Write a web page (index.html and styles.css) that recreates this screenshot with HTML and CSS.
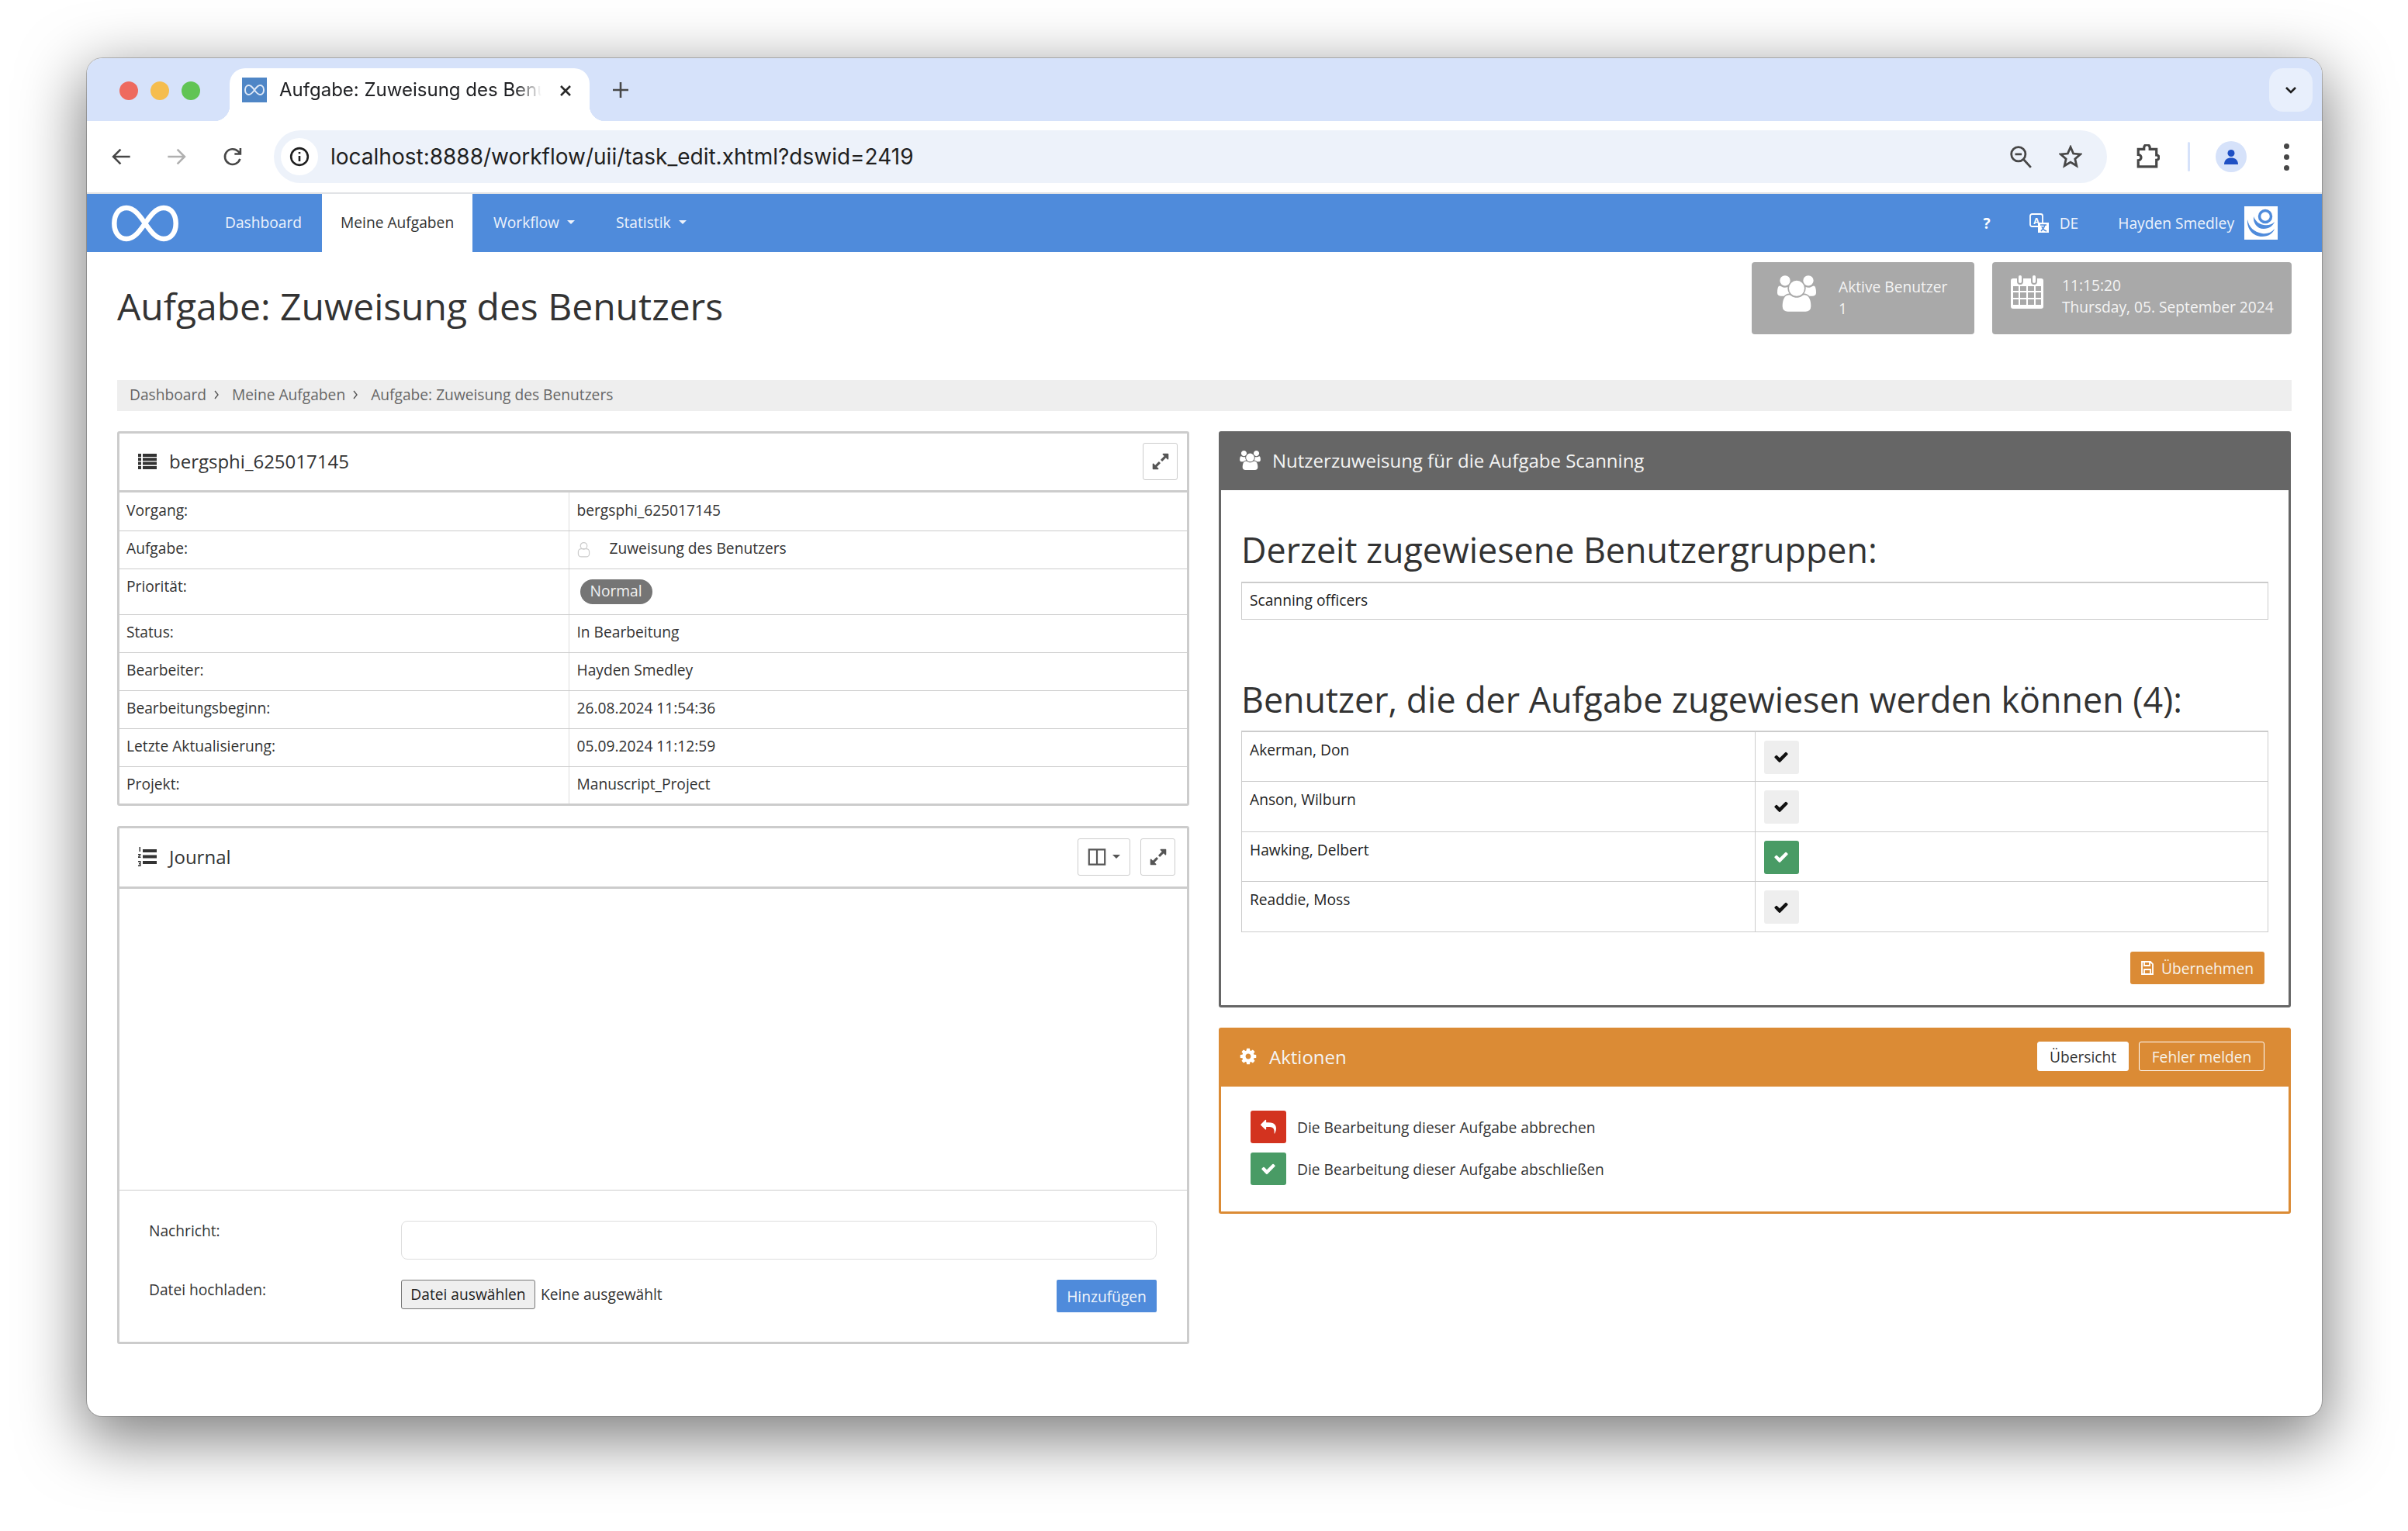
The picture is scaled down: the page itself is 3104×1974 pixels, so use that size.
FILE: index.html
```html
<!DOCTYPE html>
<html lang="de">
<head>
<meta charset="utf-8">
<title>Aufgabe: Zuweisung des Benutzers</title>
<link rel="stylesheet" href="styles.css">
</head>
<body>
<svg class="sprite" width="0" height="0">
  <defs>
    <symbol id="i-check" viewBox="0 0 1792 1792"><path d="M1671 566q0 40-28 68l-724 724-136 136q-28 28-68 28t-68-28l-136-136-362-362q-28-28-28-68t28-68l136-136q28-28 68-28t68 28l294 295 656-657q28-28 68-28t68 28l136 136q28 28 28 68z"/></symbol>
    <symbol id="i-users" viewBox="0 0 1920 1792"><path d="M593 896q-162 5-265 128h-134q-82 0-138-40.500t-56-118.500q0-353 124-353 6 0 43.500 21t97.500 42.500 119 21.500q67 0 133-23-5 37-5 66 0 139 81 256zm1071 637q0 120-73 189.500t-194 69.500h-874q-121 0-194-69.500t-73-189.500q0-53 3.500-103.500t14-109 26.500-108.500 43-97.500 62-81 85.500-53.500 111.500-20q10 0 43 21.500t73 48 107 48 135 21.500 135-21.500 107-48 73-48 43-21.500q61 0 111.500 20t85.500 53.500 62 81 43 97.500 26.500 108.500 14 109 3.500 103.500zm-1024-1277q0 106-75 181t-181 75-181-75-75-181 75-181 181-75 181 75 75 181zm704 384q0 159-112.500 271.500t-271.500 112.500-271.500-112.500-112.500-271.500 112.500-271.500 271.500-112.500 271.500 112.500 112.500 271.500zm576 225q0 78-56 118.500t-138 40.500h-134q-103-123-265-128 81-117 81-256 0-29-5-66 66 23 133 23 59 0 119-21.500t97.500-42.500 43.500-21q124 0 124 353zm-128-609q0 106-75 181t-181 75-181-75-75-181 75-181 181-75 181 75 75 181z"/></symbol>
    <symbol id="i-cog" viewBox="0 0 1792 1792"><path d="M1152 896q0-106-75-181t-181-75-181 75-75 181 75 181 181 75 181-75 75-181zm512-109v222q0 12-8 23t-20 13l-185 28q-19 54-39 91 35 50 107 138 10 12 10 25t-9 23q-27 37-99 108t-94 71q-12 0-26-9l-138-108q-44 23-91 38-16 136-29 186-7 28-36 28h-222q-14 0-24.500-8.500t-11.500-21.500l-28-184q-49-16-90-37l-141 107q-10 9-25 9-14 0-25-11-126-114-165-168-7-10-7-23 0-12 8-23 15-21 51-66.500t54-70.500q-27-50-41-99l-183-27q-13-2-21-12.500t-8-23.500v-222q0-12 8-23t19-13l186-28q14-46 39-92-40-57-107-138-10-12-10-24 0-10 9-23 26-36 98.500-107.500t94.500-71.500q13 0 26 10l138 107q44-23 91-38 16-136 29-186 7-28 36-28h222q14 0 24.500 8.500t11.500 21.500l28 184q49 16 90 37l142-107q9-9 24-9 13 0 25 10 129 119 165 170 7 8 7 22 0 12-8 23-15 21-51 66.500t-54 70.500q26 50 41 98l183 28q13 2 21 12.500t8 23.500z"/></symbol>
    <symbol id="i-reply" viewBox="0 0 1792 1792"><path d="M1792 1120q0 166-127 451-3 7-10.500 24t-13.500 30-13 22q-12 17-28 17-15 0-23.500-10t-8.500-25q0-9 2.500-26.500t2.500-23.500q5-68 5-123 0-101-17.500-181t-48.500-138.500-80-101-105.500-69.500-133-42.500-154-21.500-175.500-6h-224v256q0 26-19 45t-45 19-45-19l-512-512q-19-19-19-45t19-45l512-512q19-19 45-19t45 19 19 45v256h224q713 0 875 403 53 134 53 333z"/></symbol>
    <symbol id="i-expand" viewBox="0 0 1792 1792"><path d="M883 1056q0 13-10 23l-332 332 144 144q19 19 19 45t-19 45-45 19h-448q-26 0-45-19t-19-45v-448q0-26 19-45t45-19 45 19l144 144 332-332q10-10 23-10t23 10l114 114q10 10 10 23zm781-864v448q0 26-19 45t-45 19-45-19l-144-144-332 332q-10 10-23 10t-23-10l-114-114q-10-10-10-23t10-23l332-332-144-144q-19-19-19-45t19-45 45-19h448q26 0 45 19t19 45z"/></symbol>
    <symbol id="i-infinity" viewBox="0 0 86 48"><path fill="none" stroke="currentColor" stroke-width="6.500" d="M43 24C36 14 29 4 19 4 9 4 3.300 13 3.300 24S9 44 19 44c10 0 17-10 24-20S57 4 67 4c10 0 15.700 9 15.700 20S77 44 67 44C57 44 50 34 43 24Z"/></symbol>
  </defs>
</svg>

<div class="window">
  <div class="tabstrip">
    <div class="lights">
      <span class="light light-red"></span>
      <span class="light light-yellow"></span>
      <span class="light light-green"></span>
    </div>
    <div class="tab">
      <span class="favicon"><svg class="favicon-mark"><use href="#i-infinity"/></svg></span>
      <span class="tab-title">Aufgabe: Zuweisung des Benutzers</span>
      <svg class="tab-close" viewBox="0 0 16 16"><path d="M2 2l12 12M14 2L2 14"/></svg>
    </div>
    <svg class="tab-new" viewBox="0 0 20 20"><path d="M10 0v20M0 10h20"/></svg>
    <span class="tab-menu"><svg viewBox="0 0 16 10"><path d="M2 2l6 6 6-6"/></svg></span>
  </div>

  <div class="toolbar">
    <svg class="tool tool-back" viewBox="0 0 24 24"><path d="M22 12H4M11.500 4l-8 8 8 8"/></svg>
    <svg class="tool tool-fwd" viewBox="0 0 24 24"><path d="M2 12h18M12.500 4l8 8-8 8"/></svg>
    <svg class="tool tool-reload" viewBox="0 0 24 24"><path d="M20 14.500A8.500 8.500 0 1 1 18 6.200L20.500 9M20.500 2.500v6.500H14"/></svg>
    <div class="omnibox">
      <span class="site-info"><svg viewBox="0 0 24 24"><circle cx="12" cy="12" r="10"/><path d="M12 11v6.500M12 6.500v2"/></svg></span>
      <span class="url">localhost:8888/workflow/uii/task_edit.xhtml?dswid=2419</span>
      <svg class="omni-icon" viewBox="0 0 28 28"><circle cx="11" cy="11" r="8.500"/><path d="M17 17l9 10M7 11h8"/></svg>
      <svg class="omni-icon omni-star" viewBox="0 0 28 28"><path d="M14 2.500l3.400 7.800 8.400.8-6.400 5.600 1.900 8.300-7.300-4.400-7.300 4.400 1.900-8.300-6.400-5.600 8.400-.8z"/></svg>
    </div>
    <svg class="tool tool-ext" viewBox="0 0 30 30"><path d="M11 6V4a3 3 0 0 1 7 0v2h8v7a3 3 0 0 1 0 6v8H4v-7.500a3.500 3.500 0 0 0 0-7V6z"/></svg>
    <span class="tool-divider"></span>
    <span class="profile"><svg viewBox="0 0 24 24"><circle cx="12" cy="7.500" r="4.500"/><path d="M3 22c0-6 4-8.500 9-8.500s9 2.500 9 8.500z"/></svg></span>
    <span class="kebab"><i></i><i></i><i></i></span>
  </div>

  <nav class="appnav">
    <svg class="logo"><use href="#i-infinity"/></svg>
    <a class="nav-item">Dashboard</a>
    <a class="nav-item nav-active">Meine Aufgaben</a>
    <a class="nav-item">Workflow<span class="caret"></span></a>
    <a class="nav-item">Statistik<span class="caret"></span></a>
    <span class="nav-spacer"></span>
    <a class="nav-help">?</a>
    <svg class="nav-translate" viewBox="0 0 26 26"><rect class="tr-back" x="1" y="1" width="16" height="16" rx="2.500"/><text class="tr-letter" x="9" y="13.500">A</text><path class="tr-front" d="M11 12h14v13H11z"/><path class="tr-x" d="M14 15h8M20 15c-1 4-3 6-5 8M16 17c1 3 3 5 6 6"/></svg>
    <a class="nav-lang">DE</a>
    <a class="nav-user">Hayden Smedley</a>
    <svg class="avatar" viewBox="0 0 43 43"><rect width="43" height="43" fill="#fff"/><path class="av-blue" d="M4 17c-1 12 7 22 19 22 8 0 14-4 16-10-4 5-10 7-16 6C12 33 6 27 4 17z"/><path class="av-blue" d="M12 13c-1 8 4 16 13 16 7 0 12-4 14-9-4 4-9 5-14 4-6-1-11-5-13-11z"/><circle class="av-ring" cx="27" cy="13" r="7.500"/></svg>
  </nav>

  <main class="page">
    <header class="page-head">
      <h1 class="page-title">Aufgabe: Zuweisung des Benutzers</h1>
      <div class="stat stat-users">
        <svg class="stat-icon-users"><use href="#i-users"/></svg>
        <div class="stat-text"><div>Aktive Benutzer</div><div>1</div></div>
      </div>
      <div class="stat stat-time">
        <svg class="stat-icon-cal" viewBox="0 0 42 44"><path fill-rule="evenodd" d="M3 5h5v4a4 4 0 0 0 8 0V5h10v4a4 4 0 0 0 8 0V5h5a3 3 0 0 1 3 3v33a3 3 0 0 1-3 3H3a3 3 0 0 1-3-3V8a3 3 0 0 1 3-3zm0 10v6h7v-6zm9 0v6h8v-6zm10 0v6h8v-6zm10 0v6h7v-6zM3 23v7h7v-7zm9 0v7h8v-7zm10 0v7h8v-7zm10 0v7h7v-7zM3 32v7h7v-7zm9 0v7h8v-7zm10 0v7h8v-7zm10 0v7h7v-7z"/><rect x="10" y="1" width="4" height="10" rx="2"/><rect x="28" y="1" width="4" height="10" rx="2"/></svg>
        <div class="stat-text"><div>11:15:20</div><div>Thursday, 05. September 2024</div></div>
      </div>
    </header>

    <div class="breadcrumb">
      <a>Dashboard</a><svg class="crumb-sep" viewBox="0 0 8 12"><path d="M2 1l4 5-4 5"/></svg>
      <a>Meine Aufgaben</a><svg class="crumb-sep" viewBox="0 0 8 12"><path d="M2 1l4 5-4 5"/></svg>
      <a>Aufgabe: Zuweisung des Benutzers</a>
    </div>

    <div class="columns">
      <div class="column">
        <section class="panel">
          <div class="panel-head panel-head-slim">
            <svg class="head-icon" viewBox="0 0 24 20"><path d="M0 0h4v4H0zM6 0h18v4H6zM0 5.300h4v4H0zM6 5.300h18v4H6zM0 10.600h4v4H0zM6 10.600h18v4H6zM0 16h4v4H0zM6 16h18v4H6z"/></svg>
            <h2 class="panel-title">bergsphi_625017145</h2>
            <span class="icon-btn icon-btn-first"><svg><use href="#i-expand"/></svg></span>
          </div>
          <table class="details">
            <tr><th>Vorgang:</th><td>bergsphi_625017145</td></tr>
            <tr><th>Aufgabe:</th><td><svg class="task-icon" viewBox="0 0 18 22"><circle cx="9" cy="6" r="4.500"/><rect x="1.500" y="10" width="15" height="11" rx="4"/></svg>Zuweisung des Benutzers</td></tr>
            <tr class="row-priority"><th>Priorität:</th><td><span class="badge">Normal</span></td></tr>
            <tr><th>Status:</th><td>In Bearbeitung</td></tr>
            <tr><th>Bearbeiter:</th><td>Hayden Smedley</td></tr>
            <tr><th>Bearbeitungsbeginn:</th><td>26.08.2024 11:54:36</td></tr>
            <tr><th>Letzte Aktualisierung:</th><td>05.09.2024 11:12:59</td></tr>
            <tr><th>Projekt:</th><td>Manuscript_Project</td></tr>
          </table>
        </section>

        <section class="panel">
          <div class="panel-head">
            <svg class="head-icon head-icon-ol" viewBox="0 0 24 25"><path d="M6 3h18v4H6zM6 10.500h18v4H6zM6 18h18v4H6zM1.500 0h1.500v6H1.500zM0 9h3.500v1.500L1.500 12.500h2V14H0v-1.500l2-2H0zM0 18h3.500v7H0v-1.500h2v-1.200H1v-1.300h1v-1.500H0z"/></svg>
            <h2 class="panel-title">Journal</h2>
            <span class="icon-btn icon-btn-cols"><svg viewBox="0 0 20 20"><path class="cols-shape" d="M1.500 2h17v16h-17zM10 2v16"/></svg><span class="caret caret-dark"></span></span>
            <span class="icon-btn"><svg><use href="#i-expand"/></svg></span>
          </div>
          <div class="journal-body"></div>
          <form class="journal-form">
            <label class="form-label">Nachricht:</label>
            <input class="form-input" type="text">
            <label class="form-label">Datei hochladen:</label>
            <div class="file-row">
              <button class="file-btn" type="button">Datei auswählen</button>
              <span class="file-name">Keine ausgewählt</span>
              <button class="btn-blue" type="button">Hinzufügen</button>
            </div>
          </form>
        </section>
      </div>

      <div class="column">
        <section class="panel panel-dark">
          <div class="panel-bar">
            <svg class="bar-icon-users"><use href="#i-users"/></svg>
            <h2 class="bar-title">Nutzerzuweisung für die Aufgabe Scanning</h2>
          </div>
          <div class="assign-body">
            <h3 class="assign-heading">Derzeit zugewiesene Benutzergruppen:</h3>
            <table class="assign-table"><tr><td>Scanning officers</td></tr></table>
            <h3 class="assign-heading assign-heading-second">Benutzer, die der Aufgabe zugewiesen werden können (4):</h3>
            <table class="assign-table users-table">
              <tr><td>Akerman, Don</td><td><span class="check-btn"><svg><use href="#i-check"/></svg></span></td></tr>
              <tr><td>Anson, Wilburn</td><td><span class="check-btn"><svg><use href="#i-check"/></svg></span></td></tr>
              <tr><td>Hawking, Delbert</td><td><span class="check-btn check-on"><svg><use href="#i-check"/></svg></span></td></tr>
              <tr><td>Readdie, Moss</td><td><span class="check-btn"><svg><use href="#i-check"/></svg></span></td></tr>
            </table>
            <div class="assign-foot">
              <button class="btn-orange" type="button"><svg viewBox="0 0 16 18"><path d="M1 1h11l3 3v13H1zM4 1v5h7V1M4 17v-6h8v6"/></svg>Übernehmen</button>
            </div>
          </div>
        </section>

        <section class="panel panel-orange">
          <div class="panel-bar">
            <svg class="bar-icon-cog"><use href="#i-cog"/></svg>
            <h2 class="bar-title">Aktionen</h2>
            <button class="bar-btn bar-btn-white" type="button">Übersicht</button>
            <button class="bar-btn bar-btn-line" type="button">Fehler melden</button>
          </div>
          <div class="actions-body">
            <div class="action"><span class="action-btn action-red"><svg><use href="#i-reply"/></svg></span><span>Die Bearbeitung dieser Aufgabe abbrechen</span></div>
            <div class="action"><span class="action-btn action-green"><svg><use href="#i-check"/></svg></span><span>Die Bearbeitung dieser Aufgabe abschließen</span></div>
          </div>
        </section>
      </div>
    </div>
  </main>
</div>
</body>
</html>
```
FILE: styles.css
```css
* { box-sizing: border-box; }
html, body { margin: 0; height: 100%; }
body {
  width: 3104px; height: 1974px; overflow: hidden;
  padding: 75px 111px 148px 112px;
  background: #fff;
  font-family: "Open Sans", sans-serif;
  font-size: 19.200px; color: #333;
}
.sprite { position: absolute; }
svg { display: block; flex: none; fill: currentColor; }

.window {
  height: 1751px; border-radius: 20px; overflow: hidden; background: #fff;
  display: flex; flex-direction: column;
  box-shadow: 0 0 0 1px rgba(0,0,0,.22), 0 24px 80px 6px rgba(0,0,0,.5);
}

/* browser chrome */
.tabstrip {
  height: 81px; flex: none; background: #d6e2fa;
  display: flex; align-items: flex-start; padding-top: 13px;
}
.lights { display: flex; gap: 16px; padding: 17px 0 0 42px; width: 184px; }
.light { width: 24px; height: 24px; border-radius: 50%; }
.light-red { background: #ee6a5f; }
.light-yellow { background: #f5bd4f; }
.light-green { background: #61c454; }
.tab {
  position: relative; width: 464px; height: 68px; background: #fff;
  border-radius: 20px 20px 0 0; display: flex; align-items: flex-start;
  padding: 12px 16px 0; color: #1f1f1f;
}
.tab::before, .tab::after {
  content: ""; position: absolute; bottom: 0; width: 20px; height: 20px;
}
.tab::before { left: -20px; background: radial-gradient(circle at 0 0, transparent 20px, #fff 20.500px); }
.tab::after { right: -20px; background: radial-gradient(circle at 100% 0, transparent 20px, #fff 20.500px); }
.favicon { width: 32px; height: 32px; background: #4f86c6; display: flex; align-items: center; justify-content: center; flex: none; color: #dfe9f7; }
.favicon-mark { width: 26px; height: 16px; }
.tab-title {
  width: 338px; flex: none; margin-left: 16px; white-space: nowrap; overflow: hidden;
  font: 400 24px/32px Inter, sans-serif; color: #202124;
  -webkit-mask-image: linear-gradient(90deg, #000 90%, transparent 100%);
  mask-image: linear-gradient(90deg, #000 90%, transparent 100%);
}
.tab-close { width: 16px; height: 16px; margin: 9px 0 0 23px; fill: none; stroke: #2a2a2a; stroke-width: 2.600; }
.tab-new { width: 20px; height: 20px; margin: 18px 0 0 30px; fill: none; stroke: #474747; stroke-width: 2.600; }
.tab-menu {
  margin-left: auto; margin-right: 12px; width: 56px; height: 56px; border-radius: 18px;
  background: #e8effc; display: flex; align-items: center; justify-content: center;
}
.tab-menu svg { width: 16px; height: 10px; fill: none; stroke: #1f1f1f; stroke-width: 2.600; }

.toolbar {
  height: 94px; flex: none; background: #fff; border-bottom: 2px solid #e1e3e6;
  display: flex; align-items: center; padding-left: 30px;
  border-radius: 20px 20px 0 0;
}
.tool { width: 28px; height: 28px; fill: none; stroke: #474747; stroke-width: 2.200; }
.tool-fwd { margin-left: 44px; stroke: #b0b0b0; }
.tool-reload { margin-left: 44px; }
.omnibox {
  width: 2363px; height: 68px; margin-left: 39px; border-radius: 34px; background: #edf2fa;
  display: flex; align-items: center; padding-left: 9px;
}
.site-info { width: 48px; height: 48px; border-radius: 50%; background: #fff; display: flex; align-items: center; justify-content: center; flex: none; }
.site-info svg { width: 26px; height: 26px; fill: none; stroke: #1f1f1f; stroke-width: 2.400; }
.url { margin-left: 16px; font: 400 28px/36px Inter, sans-serif; color: #1f1f1f; white-space: nowrap; }
.omni-icon { width: 30px; height: 30px; margin-left: auto; fill: none; stroke: #474747; stroke-width: 2.600; }
.omni-star { margin-left: 34px; margin-right: 32px; }
.tool-ext { width: 32px; height: 32px; margin-left: 36px; stroke-width: 3; }
.tool-divider { width: 3px; height: 38px; margin-left: 36px; border-radius: 2px; background: #d6e2fa; }
.profile { width: 40px; height: 40px; margin-left: 33px; border-radius: 50%; background: #d6e2fa; display: flex; align-items: center; justify-content: center; }
.profile svg { width: 24px; height: 26px; fill: #1f50c4; }
.kebab { display: flex; flex-direction: column; gap: 7px; margin-left: 48px; }
.kebab i { width: 7px; height: 7px; border-radius: 50%; background: #474747; }

/* app nav */
.appnav {
  height: 75px; flex: none; background: #4f8bdb; color: #eef3fb;
  display: flex; align-items: stretch;
}
.logo { width: 86px; height: 48px; margin: 14px 33px 0 32px; color: #fff; }
.nav-item { display: flex; align-items: center; padding: 0 26px 2px 27px; line-height: 1; }
.nav-active { background: #fff; color: #333; padding: 0 24px 2px; width: 194px; white-space: nowrap; }
.caret {
  display: inline-block; width: 0; height: 0; margin-left: 10px;
  border: 5px solid transparent; border-top-color: currentColor; border-bottom: 0;
}
.nav-spacer { flex: 1; }
.nav-help { align-self: center; font-weight: 700; margin-right: 50px; color: #fff; }
.nav-translate { align-self: center; width: 26px; height: 26px; margin-right: 13px; }
.tr-back { fill: none; stroke: #fff; stroke-width: 1.800; }
.tr-letter { font: 700 11px "Open Sans", sans-serif; fill: #fff; text-anchor: middle; }
.tr-front { fill: #fff; }
.tr-x { fill: none; stroke: #4f8bdb; stroke-width: 1.600; }
.nav-lang { align-self: center; margin-right: 51px; }
.nav-user { align-self: center; margin-right: 13px; }
.avatar { align-self: center; width: 43px; height: 43px; margin-right: 57px; }
.av-blue { fill: #4f8bdb; }
.av-ring { fill: none; stroke: #4f8bdb; stroke-width: 3.500; }

/* page */
.page { padding: 13px 39px 0; flex: 1; }
.page-head { display: flex; align-items: flex-start; gap: 23px; height: 93px; }
.page-title { flex: 1; margin: 26px 0 0; font-size: 48px; font-weight: 400; line-height: 62px; color: #333; }
.stat {
  height: 93px; background: #a9a9a9; border-radius: 4px; color: #f4f4f4;
  display: flex; align-items: flex-start; line-height: 28px;
}
.stat-users { width: 287px; padding: 17px 0 0 33px; }
.stat-time { width: 386px; padding: 15px 0 0 24px; }
.stat-icon-users { width: 50px; height: 47px; color: #fff; }
.stat-icon-cal { width: 42px; height: 44px; color: #fff; margin-top: 1px; }
.stat-users .stat-text { margin-left: 29px; }
.stat-time .stat-text { margin-left: 24px; }
.stat-text { white-space: nowrap; padding-top: 1px; }

.breadcrumb {
  height: 40px; margin: 59px 0 26px; padding: 0 0 3px 16px; background: #eee; color: #666;
  display: flex; align-items: center;
}
.crumb-sep { width: 8px; height: 12px; margin: 0 16px 0 9px; fill: none; stroke: #555; stroke-width: 1.400; }

.columns { display: grid; grid-template-columns: 1382px 1382px; gap: 38px; align-items: start; }
.column { display: flex; flex-direction: column; gap: 26px; }

.panel { border: 3px solid #ccc; border-radius: 3px; background: #fff; }
.panel-head {
  height: 78px; display: flex; align-items: center; padding: 0 15px 2px 24px;
  border-bottom: 3px solid #ccc; gap: 13px;
}
.panel-head-slim { height: 76px; }
.head-icon { width: 24px; height: 20px; color: #333; }
.head-icon-ol { height: 25px; }
.panel-title { margin: 0 auto 0 3px; font-size: 24px; font-weight: 400; color: #333; }
.icon-btn {
  width: 45px; height: 48px; border: 1px solid #ccc; border-radius: 3px; background: #fff;
  display: flex; align-items: center; justify-content: center; color: #555; flex: none;
}
.icon-btn svg { width: 24px; height: 24px; }
.icon-btn-first { margin-right: -3px; }
.icon-btn-cols { width: 68px; gap: 8px; }
.cols-shape { fill: none; stroke: #555; stroke-width: 1.800; }
.caret-dark { margin-left: 0; }

.details { width: 100%; border-collapse: collapse; }
.details th, .details td {
  font-weight: 400; text-align: left; vertical-align: top; padding: 8px 10px 0; line-height: 28px;
  border-bottom: 1px solid #ccc; color: #333; height: 49px;
}
.details tr:first-child th, .details tr:first-child td { padding-top: 9px; }
.details tr:last-child th, .details tr:last-child td { border-bottom: 0; height: 48px; }
.details th { width: 579px; padding-left: 9px; border-right: 1px solid #ddd; }
.details td { white-space: nowrap; }
.task-icon { display: inline-block; width: 17px; height: 21px; margin-right: 25px; vertical-align: -5px; fill: none; stroke: #ccc; stroke-width: 1.300; }
.details .row-priority td { padding: 13px 0 0 14px; height: 59px; }
.badge {
  display: block; width: 93px; height: 32px; border-radius: 16px; background: #757575; color: #f2f2f2;
  text-align: center; line-height: 30px;
}

.journal-body { height: 389px; border-bottom: 1px solid #ccc; }
.journal-form {
  height: 195px; display: grid; grid-template-columns: 325px 974px; grid-template-rows: 50px 42px;
  row-gap: 26px; padding: 39px 0 0 38px;
}
.form-label { line-height: 26px; color: #333; }
.form-input { width: 974px; height: 50px; border: 1px solid #ddd; border-radius: 8px; background: #fff; }
.file-row { display: flex; align-items: flex-start; }
.file-btn {
  width: 173px; height: 38px; padding: 0 0 2px; background: #efefef; border: 1px solid #767676; border-radius: 3px;
  font: 400 19.200px "Open Sans", sans-serif; color: #222; white-space: nowrap;
}
.file-name { margin-left: 7px; line-height: 38px; color: #333; }
.btn-blue {
  margin-left: auto; width: 129px; height: 42px; background: #4f8bdb; border: 0; border-radius: 2px;
  color: #f2f6fc; font: 400 19.200px "Open Sans", sans-serif; padding: 0;
}

.panel-dark { border-color: #666; height: 743px; }
.panel-orange { border-color: #db8b35; height: 240px; }
.panel-bar { display: flex; align-items: center; color: #f4f4f4; margin-top: -3px; height: 76px; padding-bottom: 2px; }
.panel-dark .panel-bar { background: #666; }
.panel-orange .panel-bar { background: #db8b35; }
.bar-icon-users { width: 27px; height: 25px; margin-left: 24px; color: #fff; }
.bar-icon-cog { width: 24px; height: 24px; margin-left: 23px; color: #fff; }
.bar-title { margin: 0 0 0 15px; font-size: 24px; font-weight: 400; }
.panel-orange .bar-title { flex: 1; }

.assign-body { padding: 46px 26px 0; }
.assign-heading { margin: 0 0 10px; font-size: 44.800px; font-weight: 400; line-height: 62px; color: #333; }
.assign-heading-second { margin-top: 72px; margin-bottom: 9px; }
.assign-table { width: 100%; border-collapse: collapse; border: 1px solid #ccc; border-top-width: 2px; }
.assign-table td { padding: 8px 10px 0; line-height: 28px; vertical-align: top; height: 47px; color: #222; }
.users-table td { border: 1px solid #ccc; height: 64.750px; padding-top: 9px; width: 50%; }
.users-table td + td { padding: 11px 11px 0; }
.check-btn { display: flex; align-items: center; justify-content: center; width: 45px; height: 43px; background: #eee; border-radius: 3px; color: #111; }
.check-btn svg { width: 20px; height: 20px; }
.check-on { background: #499b65; color: #fff; }
.assign-foot { display: flex; justify-content: flex-end; padding: 25px 5px 0 0; }
.btn-orange {
  display: flex; align-items: center; justify-content: center; gap: 10px; width: 173px; height: 42px; border: 0; border-radius: 3px;
  background: #db8b35; color: #f8f3ea; font: 400 19.200px "Open Sans", sans-serif; padding: 0;
}
.btn-orange svg { width: 16px; height: 18px; fill: none; stroke: #fff; stroke-width: 1.800; }

.bar-btn { height: 38px; border-radius: 3px; font: 400 19.200px "Open Sans", sans-serif; padding: 0; }
.bar-btn-white { width: 118px; background: #fff; border: 1px solid #fff; color: #333; }
.bar-btn-line { width: 162px; margin: 0 31px 0 13px; background: transparent; border: 1px solid #fff; color: #f6f1e6; }

.actions-body { padding: 31px 0 0 38px; display: flex; flex-direction: column; gap: 12px; }
.action { display: flex; align-items: center; gap: 14px; color: #333; }
.action-btn { width: 46px; height: 42px; border-radius: 3px; display: flex; align-items: center; justify-content: center; color: #fff; }
.action-btn svg { width: 20px; height: 20px; }
.action-red { background: #d3331f; }
.action-green { background: #499b65; }
```
